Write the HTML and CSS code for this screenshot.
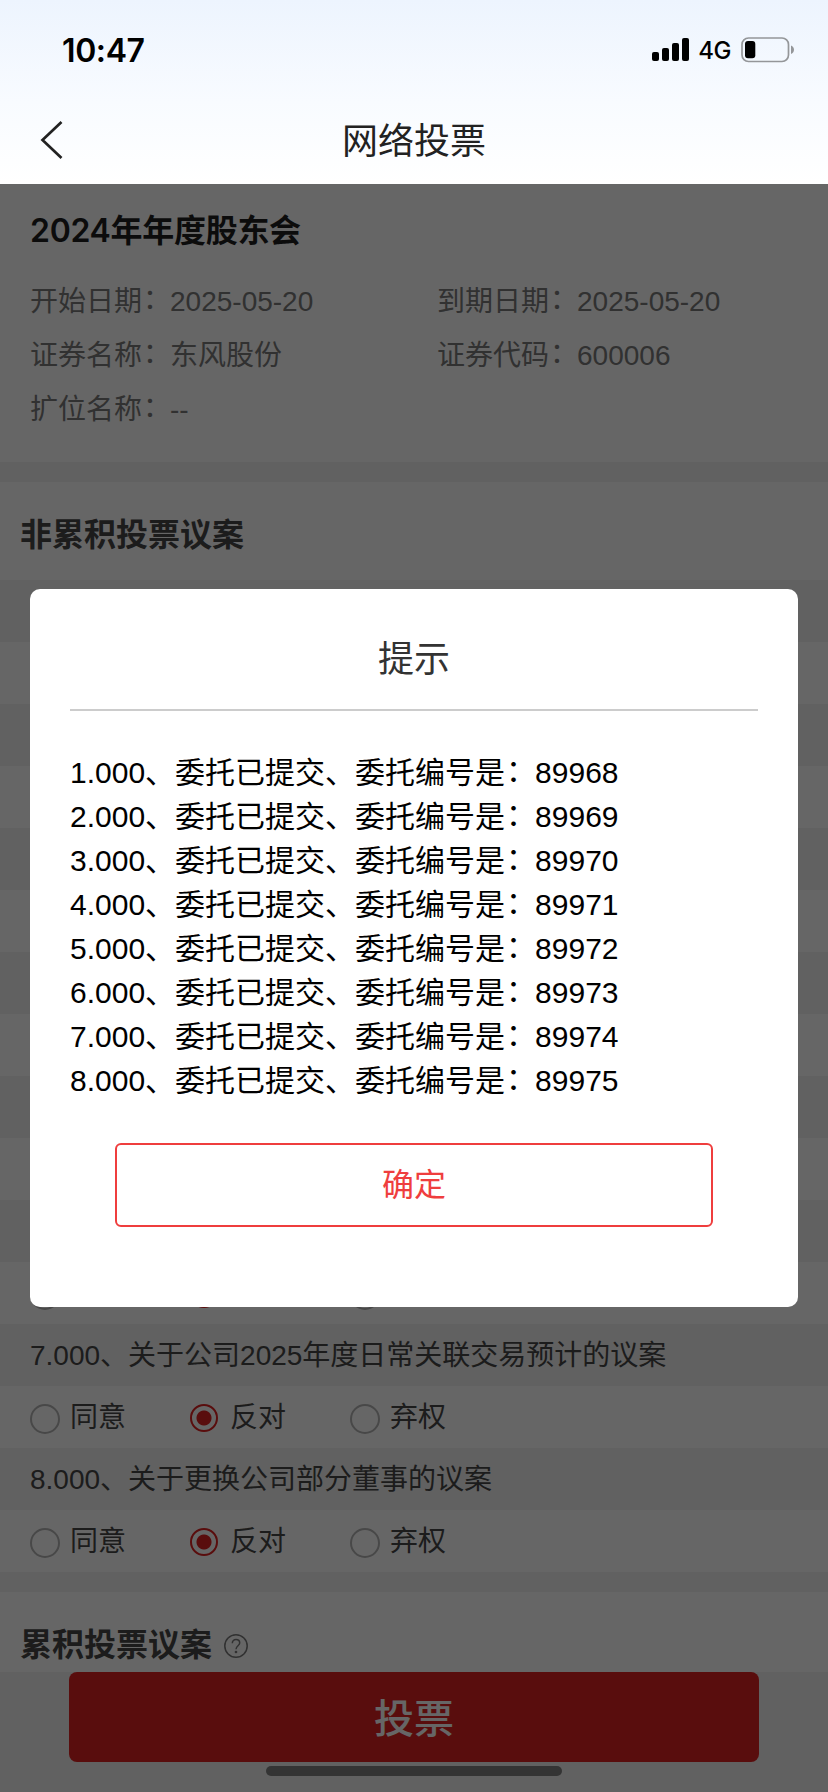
FILE: index.html
```html
<!DOCTYPE html>
<html lang="zh-CN">
<head>
  <meta charset="UTF-8" />
  <title>网络投票</title>
  <meta name="viewport" content="width=device-width, initial-scale=1.0" />
  <link rel="stylesheet" href="styles.css">
</head>
<body>
  <header class="header">
    <div class="status-bar">
      <span class="time">10:47</span>
      <div class="status-icons">
        <svg class="signal" width="38" height="24" viewBox="0 0 38 24">
          <rect x="0" y="14" width="7" height="9" rx="2" />
          <rect x="10" y="10" width="7" height="13" rx="2" />
          <rect x="20" y="5" width="7" height="18" rx="2" />
          <rect x="30" y="0" width="7" height="23" rx="2" />
        </svg>
        <span class="network">4G</span>
        <svg class="battery" width="54" height="26" viewBox="0 0 54 26">
          <rect x="1" y="1" width="46.5" height="23.5" rx="6.5" fill="none" stroke="#949699" stroke-width="1.7" />
          <rect x="4" y="4" width="10.3" height="17.3" rx="3" />
          <path d="M50 8.5c4 1.5 4 7 0 8.5z" fill="#949699" />
        </svg>
      </div>
    </div>
    <div class="nav">
      <svg class="back" width="24" height="40" viewBox="0 0 24 40">
        <path d="M21.5 2L2.5 20L21.5 38" fill="none" stroke="#222" stroke-width="2.7" />
      </svg>
      <h1>网络投票</h1>
    </div>
  </header>

  <main class="page">
    <section class="meeting">
      <h2>2024年年度股东会</h2>
      <div class="info">
        <p>开始日期<span class="colon">：</span>2025-05-20</p>
        <p>到期日期<span class="colon">：</span>2025-05-20</p>
        <p>证券名称<span class="colon">：</span>东风股份</p>
        <p>证券代码<span class="colon">：</span>600006</p>
        <p>扩位名称<span class="colon">：</span>--</p>
      </div>
    </section>

    <section class="proposals">
      <h3>非累积投票议案</h3>
      <div class="proposal"></div>
      <div class="options"></div>
      <div class="proposal"></div>
      <div class="options"></div>
      <div class="proposal"></div>
      <div class="options"></div>
      <div class="proposal"></div>
      <div class="options"></div>
      <div class="proposal"></div>
      <div class="options"></div>
      <div class="proposal"></div>
      <div class="options">
        <div class="option"><i class="radio"></i></div>
        <div class="option"><i class="radio checked"></i></div>
        <div class="option"><i class="radio"></i></div>
      </div>
      <div class="proposal">7.000、关于公司2025年度日常关联交易预计的议案</div>
      <div class="options">
        <div class="option"><i class="radio"></i><span>同意</span></div>
        <div class="option"><i class="radio checked"></i><span>反对</span></div>
        <div class="option"><i class="radio"></i><span>弃权</span></div>
      </div>
      <div class="proposal">8.000、关于更换公司部分董事的议案</div>
      <div class="options">
        <div class="option"><i class="radio"></i><span>同意</span></div>
        <div class="option"><i class="radio checked"></i><span>反对</span></div>
        <div class="option"><i class="radio"></i><span>弃权</span></div>
      </div>
    </section>

    <section class="cumulative">
      <h3>累积投票议案</h3>
      <svg class="help" width="24" height="24" viewBox="0 0 24 24" fill="none" stroke="#7a7a7a" stroke-width="1.5">
        <circle cx="12" cy="12" r="11.2" />
        <path d="M8.3 9.2C8.3 7 9.9 5.6 12 5.6s3.7 1.4 3.7 3.4c0 2.6-3.7 3-3.7 6.2" />
        <circle cx="12" cy="18" r="0.6" />
      </svg>
    </section>

    <footer class="footer">
      <button class="vote">投票</button>
      <div class="home-bar"></div>
    </footer>
  </main>

  <div class="mask">
    <div class="dialog">
      <div class="dialog-title">提示</div>
      <ul class="result">
        <li>1.000、委托已提交、委托编号是<span class="colon">：</span>89968</li>
        <li>2.000、委托已提交、委托编号是<span class="colon">：</span>89969</li>
        <li>3.000、委托已提交、委托编号是<span class="colon">：</span>89970</li>
        <li>4.000、委托已提交、委托编号是<span class="colon">：</span>89971</li>
        <li>5.000、委托已提交、委托编号是<span class="colon">：</span>89972</li>
        <li>6.000、委托已提交、委托编号是<span class="colon">：</span>89973</li>
        <li>7.000、委托已提交、委托编号是<span class="colon">：</span>89974</li>
        <li>8.000、委托已提交、委托编号是<span class="colon">：</span>89975</li>
      </ul>
      <button class="confirm">确定</button>
    </div>
  </div>
</body>
</html>
```

FILE: styles.css
```css
:root {
  --red: #df2121;
  --gray-bg: #f2f2f2;
  --text: #484848;
  --text-light: #7a7a7a;
}

* {
  box-sizing: border-box;
  margin: 0;
  padding: 0;
}

body {
  height: 1792px;
  overflow: hidden;
  font-family: "Liberation Sans", "Noto Sans CJK SC", sans-serif;
  font-size: 28px;
  color: var(--text);
  background-color: var(--gray-bg);
}

.header {
  height: 184px;
  background: linear-gradient(#edf4fe, #f8fbff 55%, #fff);
}

.status-bar {
  display: flex;
  justify-content: space-between;
  height: 96px;
  padding: 0 33px 0 62px;
  font-family: Inter, sans-serif;
  color: #000;
}

.time {
  font-size: 32px;
  font-weight: 600;
  line-height: 101px;
  letter-spacing: -0.4px;
}

.status-icons {
  display: flex;
  height: 100px;
  align-items: center;
}

.network {
  margin: 1px 10px 0 8px;
  font-size: 24px;
  font-weight: 500;
  letter-spacing: -0.5px;
}

.nav {
  display: flex;
  align-items: center;
  height: 88px;
  padding: 0 40px;
}

.nav h1 {
  flex: 1;
  padding: 0 24px 4px 0;
  text-align: center;
  font-size: 36px;
  font-weight: 400;
  color: #222;
}

.meeting {
  height: 278px;
  padding: 23px 30px 0;
  background-color: #fff;
}

.meeting h2 {
  font-family: Inter, "Noto Sans CJK SC", sans-serif;
  font-size: 32px;
  font-weight: 600;
  line-height: 48px;
  letter-spacing: -0.3px;
  color: #1f1f1f;
}

.info {
  display: grid;
  grid-template-columns: 407px 1fr;
  margin-top: 20px;
  line-height: 54px;
  color: var(--text-light);
}

/* lift the full-width colon to the middle of the line */
.colon {
  position: relative;
  top: -2px;
  left: 1px;
}

.proposals {
  margin-top: 20px;
  background-color: #fff;
}

h3 {
  font-size: 32px;
  font-weight: 700;
  color: var(--text);
}

.proposals h3 {
  height: 98px;
  padding: 0 20px;
  line-height: 107px;
}

.proposal {
  height: 62px;
  padding: 0 30px;
  line-height: 63px;
  background-color: var(--gray-bg);
}

.options {
  display: flex;
  height: 62px;
  padding: 0 30px;
}

.option {
  display: flex;
  width: 160px;
  line-height: 63px;
}

.radio {
  width: 30px;
  height: 30px;
  margin: 18px 10px 0 0;
  border: 2px solid #b4b4b4;
  border-radius: 50%;
}

.radio.checked {
  width: 28px;
  height: 28px;
  margin-right: 12px;
  border-color: var(--red);
  background: radial-gradient(circle, var(--red) 7px, transparent 8px);
}

.cumulative {
  display: flex;
  height: 80px;
  margin-top: 20px;
  padding: 0 20px;
  background-color: #fff;
}

.cumulative h3 {
  line-height: 107px;
}

.help {
  margin: 42px 0 0 12px;
}

.footer {
  display: flex;
  flex-direction: column;
  align-items: center;
}

.vote {
  width: 690px;
  height: 90px;
  padding-bottom: 3px;
  border: none;
  border-radius: 8px;
  font-family: inherit;
  font-size: 40px;
  font-weight: 500;
  color: #fff;
  background-color: var(--red);
}

.home-bar {
  width: 296px;
  height: 10px;
  margin-top: 4px;
  border-radius: 5px;
  background-color: #828282;
}

.mask {
  position: fixed;
  top: 184px;
  right: 0;
  bottom: 0;
  left: 0;
  padding: 405px 30px 0;
  background-color: rgba(0, 0, 0, 0.6);
}

.dialog {
  height: 718px;
  padding: 0 40px;
  border-radius: 10px;
  background-color: #fff;
}

.dialog-title {
  height: 122px;
  border-bottom: 2px solid #ccc;
  text-align: center;
  font-size: 36px;
  line-height: 141px;
  color: #333;
}

.result {
  padding: 40px 0;
  list-style: none;
  font-size: 30px;
  line-height: 44px;
  color: #000;
}

.confirm {
  display: block;
  width: 598px;
  height: 84px;
  margin: 0 auto;
  padding-bottom: 6px;
  border: 2px solid #ef3e3e;
  border-radius: 6px;
  font-family: inherit;
  font-size: 32px;
  color: #ef3e3e;
  background-color: #fff;
}
```
